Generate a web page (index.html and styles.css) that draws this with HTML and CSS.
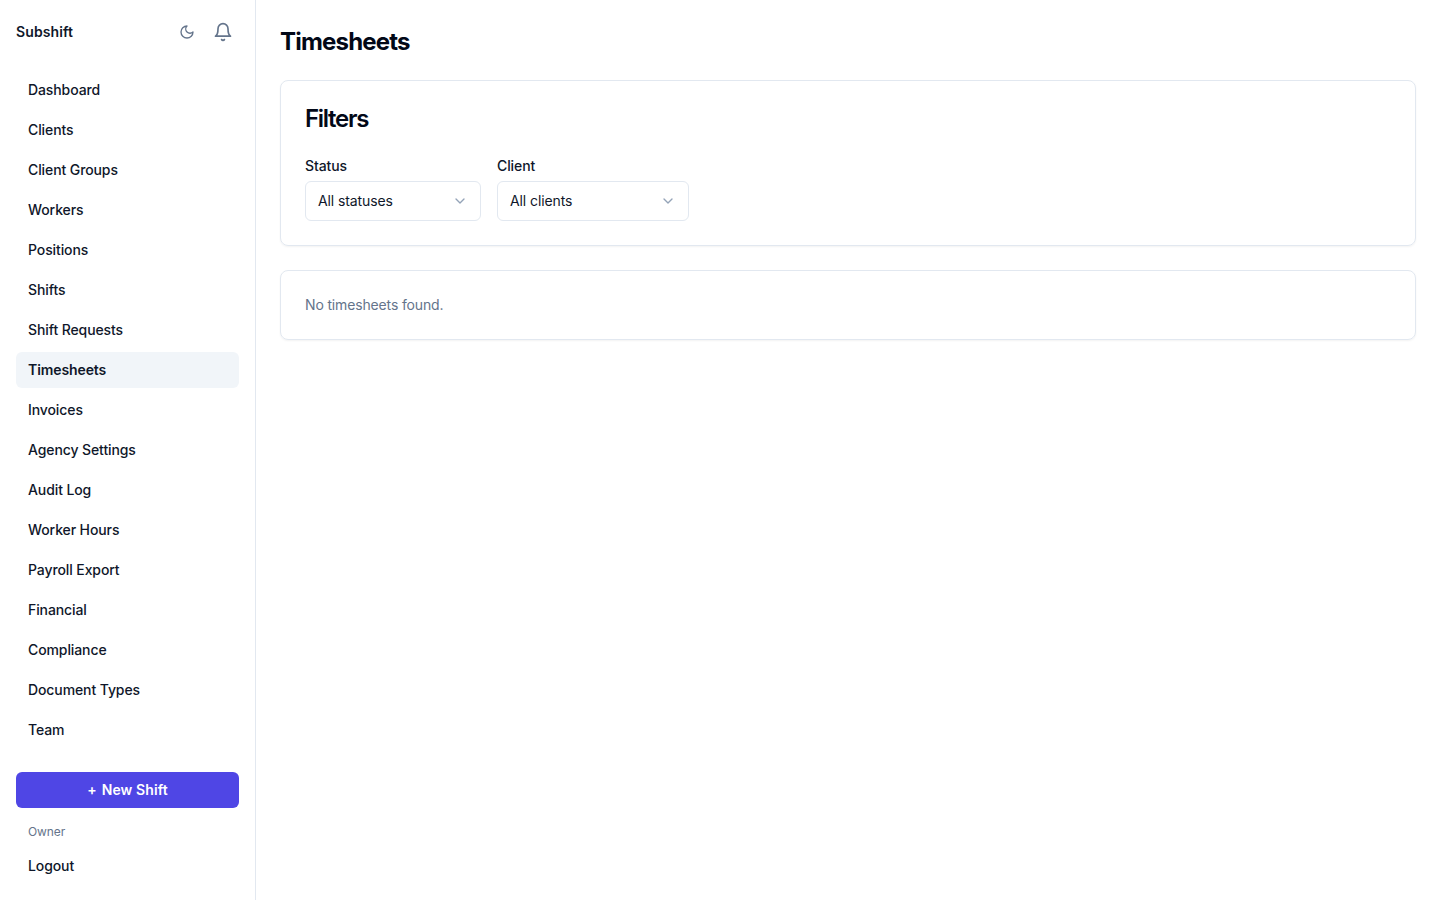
FILE: index.html
```html
<!DOCTYPE html>
<html lang="en">
<head>
  <meta charset="UTF-8">
  <title>Timesheets</title>
  <link rel="stylesheet" href="styles.css">
</head>
<body>
  <aside class="sidebar">
    <div class="brand-row">
      <span class="brand">Subshift</span>
      <div class="brand-actions">
        <button class="icon-btn" type="button" aria-label="Toggle theme">
          <svg width="16" height="16" viewBox="0 0 24 24" fill="none" stroke="currentColor" stroke-width="2" stroke-linecap="round" stroke-linejoin="round"><path d="M12 3a6 6 0 0 0 9 9 9 9 0 1 1-9-9Z"/></svg>
        </button>
        <button class="icon-btn" type="button" aria-label="Notifications">
          <svg width="20" height="20" viewBox="0 0 24 24" fill="none" stroke="currentColor" stroke-width="2" stroke-linecap="round" stroke-linejoin="round"><path d="M6 8a6 6 0 0 1 12 0c0 7 3 9 3 9H3s3-2 3-9"/><path d="M10.3 21a1.94 1.94 0 0 0 3.4 0"/></svg>
        </button>
      </div>
    </div>

    <nav class="nav">
      <a href="#">Dashboard</a>
      <a href="#">Clients</a>
      <a href="#">Client Groups</a>
      <a href="#">Workers</a>
      <a href="#">Positions</a>
      <a href="#">Shifts</a>
      <a href="#">Shift Requests</a>
      <a href="#" class="active">Timesheets</a>
      <a href="#">Invoices</a>
      <a href="#">Agency Settings</a>
      <a href="#">Audit Log</a>
      <a href="#">Worker Hours</a>
      <a href="#">Payroll Export</a>
      <a href="#">Financial</a>
      <a href="#">Compliance</a>
      <a href="#">Document Types</a>
      <a href="#">Team</a>
    </nav>

    <div class="sidebar-foot">
      <button class="new-shift" type="button"><span class="plus">+</span>New Shift</button>
      <div class="role">Owner</div>
      <a href="#" class="logout">Logout</a>
    </div>
  </aside>

  <main class="main">
    <h1>Timesheets</h1>

    <section class="card filters">
      <h2>Filters</h2>
      <div class="filter-row">
        <div class="field">
          <label>Status</label>
          <div class="select status-select">
            <span>All statuses</span>
            <svg width="16" height="16" viewBox="0 0 24 24" fill="none" stroke="currentColor" stroke-width="2" stroke-linecap="round" stroke-linejoin="round"><path d="m6 9 6 6 6-6"/></svg>
          </div>
        </div>
        <div class="field">
          <label>Client</label>
          <div class="select client-select">
            <span>All clients</span>
            <svg width="16" height="16" viewBox="0 0 24 24" fill="none" stroke="currentColor" stroke-width="2" stroke-linecap="round" stroke-linejoin="round"><path d="m6 9 6 6 6-6"/></svg>
          </div>
        </div>
      </div>
    </section>

    <section class="card empty">No timesheets found.</section>
  </main>
</body>
</html>
```

FILE: styles.css
```css
* {
  box-sizing: border-box;
}

body {
  margin: 0;
  height: 900px;
  display: flex;
  background-color: #fff;
  color: #0f172a;
  font-family: Inter, "Liberation Sans", sans-serif;
  font-size: 14px;
  line-height: 20px;
  letter-spacing: -0.1px;
  font-optical-sizing: none;
}

a {
  color: inherit;
  text-decoration: none;
}

.sidebar {
  width: 256px;
  flex-shrink: 0;
  display: flex;
  flex-direction: column;
  padding: 16px;
  border-right: 1px solid #e2e8f0;
}

.brand-row {
  height: 32px;
  display: flex;
  align-items: center;
  justify-content: space-between;
  margin-bottom: 24px;
}

.brand {
  font-weight: 600;
  letter-spacing: 0.1px;
}

.brand-actions {
  display: flex;
  align-items: center;
  gap: 4px;
}

.icon-btn {
  width: 32px;
  height: 32px;
  display: flex;
  align-items: center;
  justify-content: center;
  padding: 0;
  border: 0;
  background: none;
  color: #64748b;
}

.nav {
  display: flex;
  flex-direction: column;
  gap: 4px;
}

.nav a {
  height: 36px;
  display: flex;
  align-items: center;
  padding: 0 12px;
  border-radius: 6px;
  font-weight: 500;
}

.nav a.active {
  background-color: #f1f5f9;
  font-weight: 600;
}

.sidebar-foot {
  margin-top: auto;
  display: flex;
  flex-direction: column;
}

.new-shift {
  height: 36px;
  display: flex;
  align-items: center;
  justify-content: center;
  border: 0;
  border-radius: 6px;
  background-color: #4f46e5;
  color: #fff;
  font-family: inherit;
  font-size: 14px;
  line-height: 20px;
  font-weight: 600;
  letter-spacing: 0.1px;
  font-optical-sizing: none;
}

.plus {
  margin-right: 5px;
}

.role {
  margin-top: 16px;
  padding: 0 12px;
  color: #64748b;
  font-size: 12px;
  line-height: 16px;
}

.logout {
  height: 36px;
  display: flex;
  align-items: center;
  padding: 0 12px;
  margin-top: 8px;
  font-weight: 500;
}

.main {
  flex: 1;
  padding: 24px;
}

h1 {
  margin: 0 0 20px;
  font-size: 24px;
  line-height: 36px;
  font-weight: 700;
  letter-spacing: -0.8px;
  color: #020817;
}

.card {
  border: 1px solid #e2e8f0;
  border-radius: 8px;
  box-shadow: 0 1px 2px rgba(0,0,0,0.05);
  padding: 24px;
  margin-bottom: 24px;
}

h2 {
  margin: 0 0 23px;
  font-size: 24px;
  line-height: 28px;
  font-weight: 600;
  letter-spacing: -1.3px;
  color: #020817;
}

.filter-row {
  display: flex;
  gap: 16px;
}

.field label {
  display: block;
  margin-bottom: 5px;
  font-weight: 500;
  line-height: 20px;
}

.select {
  height: 40px;
  display: flex;
  align-items: center;
  justify-content: space-between;
  padding: 0 12px;
  border: 1px solid #e2e8f0;
  border-radius: 6px;
}

.select svg {
  color: #94a3b8;
}

.status-select {
  width: 176px;
}

.client-select {
  width: 192px;
}

.empty {
  color: #64748b;
  letter-spacing: -0.15px;
}
```
